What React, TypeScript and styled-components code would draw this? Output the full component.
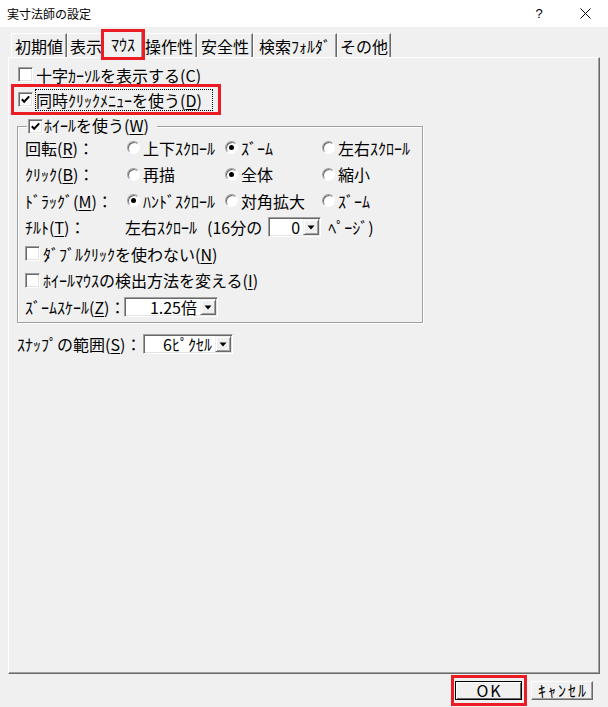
import React from "react";
import styled, { createGlobalStyle, css } from "styled-components";

const FONT = `"Noto Sans CJK JP", "Noto Sans CJK SC", "Noto Sans", sans-serif`;

const GlobalStyle = createGlobalStyle`
  html, body { margin: 0; padding: 0; background: #f0f0f0; }
  body { font-family: ${FONT}; color: #000; }
  * { box-sizing: border-box; }
  #root { width: 608px; height: 707px; }
`;

const Window = styled.div`
  width: 608px;
  height: 707px;
  background: #f0f0f0;
  display: flex;
  flex-direction: column;
  overflow: hidden;
  font-family: ${FONT};
  font-size: 16px;
  line-height: 20px;
`;

const TitleBar = styled.div`
  height: 27px;
  flex: none;
  background: #fff;
  display: flex;
  align-items: center;
  padding-left: 7px;
`;

const Title = styled.div`
  flex: 1;
  font-size: 12px;
  line-height: 16px;
`;

const TitleButton = styled.div`
  width: 46px;
  height: 27px;
  display: flex;
  align-items: center;
  justify-content: center;
  font-family: "Liberation Sans", sans-serif;
  font-size: 13px;
`;

const Body = styled.div`
  flex: 1;
  display: flex;
  flex-direction: column;
  padding: 0 8px;
`;

const TabStrip = styled.div`
  height: 30px;
  flex: none;
  display: flex;
  align-items: flex-end;
  padding-left: 3px;
`;

const Tab = styled.div<{ $w: number; $active?: boolean }>`
  width: ${(p) => p.$w}px;
  height: 24px;
  flex: none;
  display: flex;
  align-items: center;
  justify-content: center;
  white-space: nowrap;
  border-top: 1px solid #fff;
  border-left: 1px solid #fff;
  border-right: 1px solid #696969;
  box-shadow: inset -1px 0 0 #a0a0a0;
  background: #f0f0f0;
  ${(p) =>
    p.$active &&
    css`
      height: 27px;
      margin: 0 -2px -1px;
      padding-bottom: 2px;
      position: relative;
      z-index: 1;
      outline: 3px solid #ec1c24;
      outline-offset: -1px;
    `}
`;

const Panel = styled.div`
  height: 617px;
  flex: none;
  border-top: 1px solid #fff;
  border-left: 1px solid #fff;
  border-right: 1px solid #696969;
  border-bottom: 1px solid #696969;
  box-shadow: inset -1px -1px 0 #a0a0a0;
  padding: 4px 0 0 5px;
  display: flex;
  flex-direction: column;
  align-items: flex-start;
`;

const CheckRow = styled.div<{ $marked?: boolean; $pad?: number }>`
  height: 25px;
  display: flex;
  align-items: center;
  gap: 2px;
  padding-left: ${(p) => p.$pad ?? 0}px;
  white-space: nowrap;
  ${(p) =>
    p.$marked &&
    css`
      outline: 3px solid #ec1c24;
      padding-right: 5px;
    `}
`;

const CheckBoxBox = styled.span`
  width: 15px;
  height: 15px;
  flex: none;
  background: #fff;
  border: 1px solid;
  border-color: #a0a0a0 #fff #fff #a0a0a0;
  box-shadow: inset 1px 1px 0 #696969, inset -1px -1px 0 #e3e3e3;
  display: flex;
  align-items: center;
  justify-content: center;
`;

const CheckLabel = styled.span<{ $focus?: boolean; $fw?: number }>`
  display: inline-block;
  border: 1px solid transparent;
  line-height: 20px;
  ${(p) =>
    p.$focus &&
    css`
      border: 1px dotted #000;
      width: ${p.$fw}px;
    `}
`;

const Key = styled.u`
  text-decoration: underline;
  text-underline-offset: 2px;
`;

const Group = styled.fieldset`
  margin: 4px 0 0 3px;
  width: 406px;
  min-inline-size: 0;
  padding: 0 6px 5px 7px;
  border: 1px solid #a0a0a0;
  box-shadow: inset 1px 1px 0 #fff, 1px 1px 0 #fff;
`;

const Legend = styled.legend`
  margin-left: 2px;
  padding: 0 8px 0 1px;
  height: 20px;
  display: flex;
  align-items: center;
  gap: 1px;
  background: #f0f0f0;
  white-space: nowrap;
`;

const LegendText = styled.span`
  margin-top: -3px;
`;

const OptionGrid = styled.div`
  display: grid;
  grid-template-columns: 102px 98px 97px 1fr;
  grid-auto-rows: 20px;
  row-gap: 6.6px;
  padding-top: 1.5px;
  align-items: center;
  white-space: nowrap;
`;

const FullRow = styled.div`
  grid-column: 1 / -1;
  display: flex;
  align-items: center;
`;

const SpanRow = styled.div<{ $shift?: number }>`
  grid-column: 2 / -1;
  display: flex;
  align-items: center;
  margin-left: ${(p) => p.$shift ?? 0}px;
`;

const Radio = styled.span`
  display: flex;
  align-items: center;
  gap: 3px;
`;

const RadioDot = styled.span<{ $on?: boolean }>`
  width: 13px;
  height: 13px;
  flex: none;
  border-radius: 50%;
  background: #fff;
  border: 1px solid;
  border-color: #a0a0a0 #fff #fff #a0a0a0;
  box-shadow: inset 1px 1px 0 #696969;
  display: flex;
  align-items: center;
  justify-content: center;
  &::after {
    content: "";
    width: 5px;
    height: 5px;
    border-radius: 50%;
    background: ${(p) => (p.$on ? "#000" : "transparent")};
  }
`;

const Gap = styled.span<{ $w: number }>`
  display: inline-block;
  width: ${(p) => p.$w}px;
  flex: none;
`;

const Combo = styled.div<{ $w: number }>`
  width: ${(p) => p.$w}px;
  height: 20px;
  flex: none;
  display: flex;
  background: #fff;
  border: 1px solid;
  border-color: #a0a0a0 #fff #fff #a0a0a0;
  box-shadow: inset 1px 1px 0 #696969, inset -1px -1px 0 #e3e3e3;
  padding: 1px 1px 1px 2px;
`;

const ComboValue = styled.span`
  flex: 1;
  text-align: right;
  padding-right: 3px;
  line-height: 17px;
  white-space: nowrap;
`;

const ComboButton = styled.span`
  width: 16px;
  height: 16px;
  flex: none;
  background: #f0f0f0;
  border: 1px solid;
  border-color: #f0f0f0 #696969 #696969 #f0f0f0;
  box-shadow: inset 1px 1px 0 #fff, inset -1px -1px 0 #a0a0a0;
  display: flex;
  align-items: center;
  justify-content: center;
`;

const FieldRow = styled.div`
  margin: 10px 0 0 3px;
  height: 22px;
  display: flex;
  align-items: center;
  white-space: nowrap;
`;

const FieldLabel = styled.span<{ $w: number }>`
  width: ${(p) => p.$w}px;
  flex: none;
`;

const ButtonBar = styled.div`
  height: 33px;
  display: flex;
  justify-content: flex-end;
  align-items: center;
  gap: 4px;
  padding-right: 7px;
`;

const Marked = styled.div`
  border: 3px solid #ec1c24;
  padding: 3px 2px 3px 1px;
  display: flex;
`;

const Button = styled.button<{ $w: number; $default?: boolean }>`
  width: ${(p) => p.$w}px;
  height: 19px;
  padding: 0 0 1px 2px;
  margin: 0;
  font-family: ${FONT};
  font-size: 16px;
  line-height: 16px;
  color: #000;
  background: #f0f0f0;
  border: 1px solid;
  border-color: #fff #696969 #696969 #fff;
  box-shadow: inset -1px -1px 0 #a0a0a0;
  display: flex;
  align-items: center;
  justify-content: center;
  letter-spacing: 2px;
  ${(p) =>
    p.$default &&
    css`
      border-color: #000;
      box-shadow: inset 1px 1px 0 #fff, inset -1px -1px 0 #696969;
    `}
`;

function Check({ checked }: { checked?: boolean }) {
  return (
    <CheckBoxBox>
      {checked && (
        <svg width="11" height="11" viewBox="0 0 11 11">
          <path d="M1.8 5.2 L4.2 7.8 L9.2 2.4" fill="none" stroke="#000" strokeWidth="2" />
        </svg>
      )}
    </CheckBoxBox>
  );
}

function Arrow() {
  return (
    <svg width="8" height="5" viewBox="0 0 8 5">
      <polygon points="0.5,0.5 7.5,0.5 4,4.5" fill="#000" />
    </svg>
  );
}

function DropDown({ w, value }: { w: number; value: string }) {
  return (
    <Combo $w={w}>
      <ComboValue>{value}</ComboValue>
      <ComboButton>
        <Arrow />
      </ComboButton>
    </Combo>
  );
}

const tabs = [
  { label: "初期値", w: 56 },
  { label: "表示", w: 38 },
  { label: "ﾏｳｽ", w: 40, active: true },
  { label: "操作性", w: 56 },
  { label: "安全性", w: 56 },
  { label: "検索ﾌｫﾙﾀﾞ", w: 84 },
  { label: "その他", w: 54 },
];

const radioRows: { label: React.ReactNode; options: [string, boolean][] }[] = [
  {
    label: (
      <>
        回転(<Key>R</Key>)：
      </>
    ),
    options: [
      ["上下ｽｸﾛｰﾙ", false],
      ["ｽﾞｰﾑ", true],
      ["左右ｽｸﾛｰﾙ", false],
    ],
  },
  {
    label: (
      <>
        ｸﾘｯｸ(<Key>B</Key>)：
      </>
    ),
    options: [
      ["再描", false],
      ["全体", true],
      ["縮小", false],
    ],
  },
  {
    label: (
      <>
        ﾄﾞﾗｯｸﾞ(<Key>M</Key>)：
      </>
    ),
    options: [
      ["ﾊﾝﾄﾞｽｸﾛｰﾙ", true],
      ["対角拡大", false],
      ["ｽﾞｰﾑ", false],
    ],
  },
];

export default function App() {
  return (
    <>
      <GlobalStyle />
      <Window>
        <TitleBar>
          <Title>実寸法師の設定</Title>
          <TitleButton>?</TitleButton>
          <TitleButton>
            <svg width="11" height="11" viewBox="0 0 11 11">
              <path d="M0.5 0.5 L10.5 10.5 M10.5 0.5 L0.5 10.5" stroke="#000" strokeWidth="1" />
            </svg>
          </TitleButton>
        </TitleBar>
        <Body>
          <TabStrip>
            {tabs.map((t) => (
              <Tab key={t.label} $w={t.w} $active={t.active}>
                {t.label}
              </Tab>
            ))}
          </TabStrip>
          <Panel>
            <CheckRow $pad={4}>
              <Check />
              <CheckLabel>
                十字ｶｰｿﾙを表示する(<Key>C</Key>)
              </CheckLabel>
            </CheckRow>
            <CheckRow $pad={4} $marked>
              <Check checked />
              <CheckLabel $focus $fw={178}>
                同時ｸﾘｯｸﾒﾆｭｰを使う(<Key>D</Key>)
              </CheckLabel>
            </CheckRow>
            <Group>
              <Legend>
                <Check checked />
                <LegendText>
                  ﾎｲｰﾙを使う(<Key>W</Key>)
                </LegendText>
              </Legend>
              <OptionGrid>
                {radioRows.map((row, i) => (
                  <React.Fragment key={i}>
                    <span>{row.label}</span>
                    {row.options.map(([text, on]) => (
                      <Radio key={text}>
                        <RadioDot $on={on} />
                        {text}
                      </Radio>
                    ))}
                  </React.Fragment>
                ))}
                <span>
                  ﾁﾙﾄ(<Key>T</Key>)：
                </span>
                <SpanRow $shift={-2}>
                  左右ｽｸﾛｰﾙ
                  <Gap $w={10} />
                  (16分の
                  <Gap $w={6} />
                  <DropDown w={53} value="0" />
                  <Gap $w={7} />
                  ﾍﾟｰｼﾞ)
                </SpanRow>
                <FullRow>
                  <CheckRow>
                    <Check />
                    <CheckLabel>
                      ﾀﾞﾌﾞﾙｸﾘｯｸを使わない(<Key>N</Key>)
                    </CheckLabel>
                  </CheckRow>
                </FullRow>
                <FullRow>
                  <CheckRow>
                    <Check />
                    <CheckLabel>
                      ﾎｲｰﾙﾏｳｽの検出方法を変える(<Key>I</Key>)
                    </CheckLabel>
                  </CheckRow>
                </FullRow>
                <span>
                  ｽﾞｰﾑｽｹｰﾙ(<Key>Z</Key>)：
                </span>
                <SpanRow $shift={-3}>
                  <DropDown w={94} value="1.25倍" />
                </SpanRow>
              </OptionGrid>
            </Group>
            <FieldRow>
              <FieldLabel $w={126}>
                ｽﾅｯﾌﾟの範囲(<Key>S</Key>)：
              </FieldLabel>
              <DropDown w={90} value="6ﾋﾟｸｾﾙ" />
            </FieldRow>
          </Panel>
          <ButtonBar>
            <Marked>
              <Button $w={67} $default>
                OK
              </Button>
            </Marked>
            <Button $w={62}>ｷｬﾝｾﾙ</Button>
          </ButtonBar>
        </Body>
      </Window>
    </>
  );
}
